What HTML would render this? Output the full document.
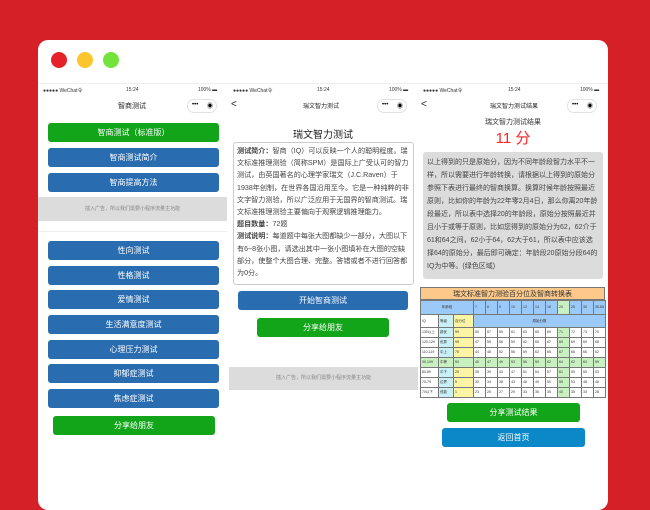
<!DOCTYPE html>
<html><head><meta charset="utf-8"><style>
*{margin:0;padding:0;box-sizing:border-box}
body{width:650px;height:500px;background:#d42026;position:relative;overflow:hidden;font-family:"Liberation Sans","Noto Sans CJK SC",sans-serif}
.win{position:absolute;left:38px;top:40px;width:570px;height:470px;background:#fff;border-radius:10px}
.dot{position:absolute;top:52px;width:16px;height:16px;border-radius:50%}
.a{position:absolute}
.btn{position:absolute;color:#fff;font-size:8px;text-align:center;border-radius:3px}
.b{background:#2a6cb0}.g{background:#12a51a}
.sb{position:absolute;font-size:5px;color:#333}
.nav{position:absolute;font-size:7px;color:#222}
.cap{position:absolute;width:30px;height:14px;border:1px solid #e2e2e2;border-radius:8px;font-size:6px}
.ad{position:absolute;background:#dcdcdc;color:#888;font-size:5px;text-align:center}
table{border-collapse:collapse;font-size:3.5px;color:#333;table-layout:fixed}
td{border:0.5px solid #777;height:10px;padding:0 1px;line-height:9px;overflow:hidden;white-space:nowrap}
</style></head><body>
<div class="win"></div>
<div class="dot" style="left:51px;background:#e5222a"></div>
<div class="dot" style="left:77px;background:#fdc52c"></div>
<div class="dot" style="left:103px;background:#72e33a"></div>
<div class="a" style="left:38px;top:83px;width:570px;height:1px;background:#eee"></div>

<!-- screen 1 -->
<div class="sb" style="left:43px;top:87px">●●●●● WeChat令</div><div class="sb" style="left:126px;top:87px">15:24</div><div class="sb" style="left:198px;top:87px">100% ▬</div>
<div class="nav" style="left:118px;top:101px">智商测试</div>
<div class="cap" style="left:187px;top:99px"><span style="position:absolute;left:4px;top:2px">•••</span><span style="position:absolute;left:19px;top:1px">◉</span></div>
<div class="btn g" style="left:48px;top:123px;width:171px;height:19px;line-height:19px">智商测试（标准版）</div>
<div class="btn b" style="left:48px;top:148px;width:171px;height:19px;line-height:19px">智商测试简介</div>
<div class="btn b" style="left:48px;top:173px;width:171px;height:19px;line-height:19px">智商提高方法</div>
<div class="ad" style="left:38px;top:197px;width:189px;height:24px;line-height:24px">插入广告，所以我们需要小程序流量主功能</div>
<div class="a" style="left:38px;top:231px;width:189px;height:1px;background:#eee"></div>
<div class="btn b" style="left:48px;top:241px;width:171px;height:19px;line-height:19px">性向测试</div>
<div class="btn b" style="left:48px;top:266px;width:171px;height:19px;line-height:19px">性格测试</div>
<div class="btn b" style="left:48px;top:290px;width:171px;height:19px;line-height:19px">爱情测试</div>
<div class="btn b" style="left:48px;top:315px;width:171px;height:19px;line-height:19px">生活满意度测试</div>
<div class="btn b" style="left:48px;top:340px;width:171px;height:19px;line-height:19px">心理压力测试</div>
<div class="btn b" style="left:48px;top:364px;width:171px;height:19px;line-height:19px">抑郁症测试</div>
<div class="btn b" style="left:48px;top:389px;width:171px;height:19px;line-height:19px">焦虑症测试</div>
<div class="btn g" style="left:53px;top:416px;width:162px;height:19px;line-height:19px">分享给朋友</div>

<!-- screen 2 -->
<div class="sb" style="left:233px;top:87px">●●●●● WeChat令</div><div class="sb" style="left:317px;top:87px">15:24</div><div class="sb" style="left:389px;top:87px">100% ▬</div>
<div class="nav" style="left:231px;top:99px;font-size:10px">&lt;</div>
<div class="nav" style="left:303px;top:101px;font-size:6px">瑞文智力测试</div>
<div class="cap" style="left:377px;top:99px"><span style="position:absolute;left:4px;top:2px">•••</span><span style="position:absolute;left:19px;top:1px">◉</span></div>
<div class="a" style="left:228px;top:126px;width:190px;text-align:center;font-size:10px;color:#222">瑞文智力测试</div>
<div class="a" style="left:233px;top:142px;width:181px;height:143px;border:1px solid #ccc;border-radius:3px;padding:2px 3px;font-size:7.1px;line-height:12.2px;color:#444"><b>测试简介：</b>智商（IQ）可以反映一个人的聪明程度。瑞文标准推理测验（简称SPM）是国际上广受认可的智力测试，由英国著名的心理学家瑞文（J.C.Raven）于1938年创制，在世界各国沿用至今。它是一种纯粹的非文字智力测验，所以广泛应用于无国界的智商测试。瑞文标准推理测验主要偏向于观察逻辑推理能力。<br><b>题目数量：</b>72题<br><b>测试说明：</b>每道题中每张大图都缺少一部分，大图以下有6~8张小图，请选出其中一张小图填补在大图的空缺部分，使整个大图合理、完整。答错或者不进行回答都为0分。</div>
<div class="btn b" style="left:238px;top:291px;width:170px;height:19px;line-height:19px">开始智商测试</div>
<div class="btn g" style="left:257px;top:318px;width:132px;height:19px;line-height:19px">分享给朋友</div>
<div class="ad" style="left:229px;top:367px;width:189px;height:23px;line-height:23px">插入广告，所以我们需要小程序流量主功能</div>

<!-- screen 3 -->
<div class="sb" style="left:423px;top:87px">●●●●● WeChat令</div><div class="sb" style="left:508px;top:87px">15:24</div><div class="sb" style="left:580px;top:87px">100% ▬</div>
<div class="nav" style="left:421px;top:99px;font-size:10px">&lt;</div>
<div class="nav" style="left:490px;top:101px;font-size:6px">瑞文智力测试结果</div>
<div class="cap" style="left:567px;top:99px"><span style="position:absolute;left:4px;top:2px">•••</span><span style="position:absolute;left:19px;top:1px">◉</span></div>
<div class="a" style="left:418px;top:117px;width:190px;text-align:center;font-size:7px;color:#333">瑞文智力测试结果</div>
<div class="a" style="left:418px;top:127px;width:190px;text-align:center;font-size:15px;color:#f22">11 分</div>
<div class="a" style="left:423px;top:152px;width:180px;height:127px;background:#dcdcdc;border-radius:3px;padding:4px 4px;font-size:7px;line-height:13px;color:#444">以上得到的只是原始分，因为不同年龄段智力水平不一样，所以需要进行年龄转换，请根据以上得到的原始分参照下表进行最终的智商换算。换算时候年龄按照最近原则，比如你的年龄为22年零2月4日，那么你离20年龄段最近，所以表中选择20的年龄段，原始分按照最近并且小于或等于原则，比如您得到的原始分为62，62介于61和64之间，62小于64，62大于61，所以表中应该选择64的原始分，最后即可确定：年龄段20原始分段64的IQ为中等。(绿色区域)</div>
<div class="a" style="left:420px;top:287px;width:185px;height:13px;background:#fcc98a;border:0.5px solid #777;text-align:center;font-size:7px;line-height:13px;color:#333">瑞文标准智力测验百分位及智商转换表</div>
<table class="a" style="left:420px;top:300px;width:185px">
<colgroup><col style="width:18px"><col style="width:15px"><col style="width:20px"><col span="10" style="width:12px"><col style="width:12px"></colgroup>
<tr style="background:#9ccaf8"><td colspan="3" style="text-align:center;height:14px">年龄段</td><td>7</td><td>8</td><td>9</td><td>10</td><td>12</td><td>14</td><td>16</td><td style="background:#c8f0c0">20</td><td>25</td><td>30</td><td>35-65</td></tr>
<tr><td style="height:13px">IQ</td><td style="background:#c9f0f8">等级</td><td style="background:#fdf5a6">百分位</td><td colspan="11" style="background:#9ccaf8;text-align:center">原始分数</td></tr>
<tr><td>130以上</td><td style="background:#c9f0f8">超优</td><td style="background:#fdf5a6">99</td><td>50</td><td>57</td><td>59</td><td>61</td><td>63</td><td>65</td><td>69</td><td style="background:#c8f0c0">71</td><td>72</td><td>73</td><td>70</td></tr>
<tr><td>120-129</td><td style="background:#c9f0f8">优秀</td><td style="background:#fdf5a6">95</td><td>47</td><td>55</td><td>56</td><td>59</td><td>62</td><td>65</td><td>67</td><td style="background:#c8f0c0">69</td><td>69</td><td>69</td><td>68</td></tr>
<tr><td>110-119</td><td style="background:#c9f0f8">中上</td><td style="background:#fdf5a6">75</td><td>44</td><td>48</td><td>52</td><td>56</td><td>59</td><td>62</td><td>65</td><td style="background:#c8f0c0">67</td><td>66</td><td>66</td><td>62</td></tr>
<tr style="background:#c8f0c0"><td>90-109</td><td>中等</td><td>50</td><td>40</td><td>47</td><td>49</td><td>53</td><td>56</td><td>59</td><td>62</td><td>64</td><td>62</td><td>60</td><td>59</td></tr>
<tr><td>80-89</td><td style="background:#c9f0f8">中下</td><td style="background:#fdf5a6">25</td><td>35</td><td>39</td><td>43</td><td>47</td><td>51</td><td>54</td><td>57</td><td style="background:#c8f0c0">61</td><td>59</td><td>55</td><td>53</td></tr>
<tr><td>70-79</td><td style="background:#c9f0f8">边界</td><td style="background:#fdf5a6">5</td><td>30</td><td>34</td><td>38</td><td>43</td><td>46</td><td>49</td><td>50</td><td style="background:#c8f0c0">55</td><td>53</td><td>48</td><td>46</td></tr>
<tr><td>70以下</td><td style="background:#c9f0f8">低能</td><td style="background:#fdf5a6">1</td><td>23</td><td>25</td><td>27</td><td>29</td><td>33</td><td>35</td><td>35</td><td style="background:#c8f0c0">40</td><td>35</td><td>33</td><td>28</td></tr>
</table>
<div class="btn g" style="left:447px;top:403px;width:133px;height:19px;line-height:19px">分享测试结果</div>
<div class="btn" style="left:442px;top:428px;width:143px;height:19px;line-height:19px;background:#0a88c8">返回首页</div>
</body></html>
